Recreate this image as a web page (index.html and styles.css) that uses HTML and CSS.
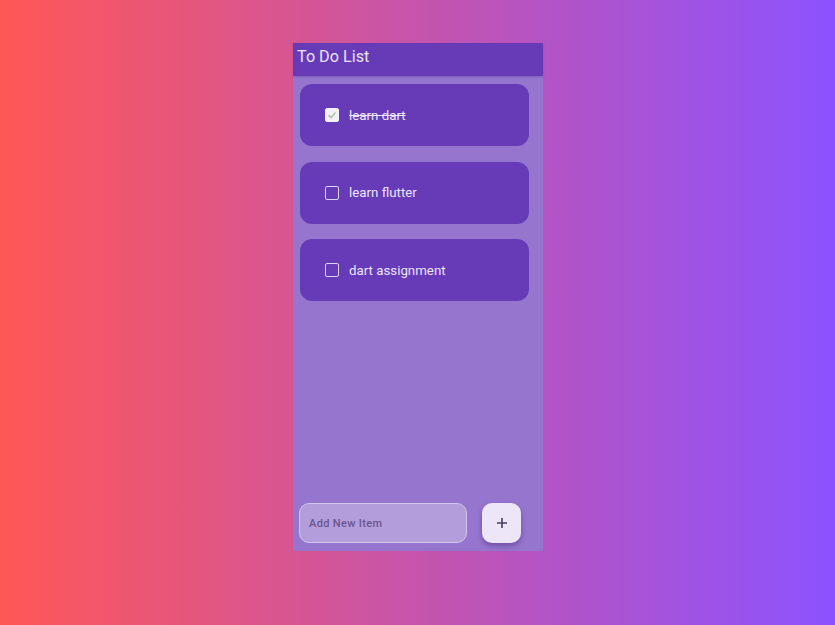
FILE: index.html
```html
<!DOCTYPE html>
<html>
<head>
<meta charset="utf-8">
<link rel="stylesheet" href="styles.css">
</head>
<body>
<div class="phone">
  <div class="appbar">To Do List</div>
  <div class="list">
    <div class="card">
      <span class="box checked">
        <svg width="10" height="10" viewBox="0 0 10 10"><path d="M1.5 5.2 L4 7.5 L8.5 2.5" fill="none" stroke="#a9c7a4" stroke-width="1.6"/></svg>
      </span>
      <span class="label done">learn dart</span>
    </div>
    <div class="card">
      <span class="box"></span>
      <span class="label">learn flutter</span>
    </div>
    <div class="card">
      <span class="box"></span>
      <span class="label">dart assignment</span>
    </div>
  </div>
  <div class="bottom">
    <div class="input">Add New Item</div>
    <div class="add">
      <svg width="12" height="12" viewBox="0 0 12 12"><path d="M6 1 V11 M1 6 H11" stroke="#4a3b63" stroke-width="1.6"/></svg>
    </div>
  </div>
</div>
</body>
</html>
```
FILE: styles.css
```css
html, body {
  margin: 0;
  padding: 0;
}
body {
  width: 835px;
  height: 625px;
  background: linear-gradient(to right, #ff5757, #8c52ff);
  font-family: Roboto, "Noto Sans", sans-serif;
  overflow: hidden;
}
.phone {
  width: 250px;
  height: 508px;
  margin: 43px 0 0 293px;
  background: #9575cd;
  display: flex;
  flex-direction: column;
}
.appbar {
  height: 33px;
  background: #673ab7;
  color: #ebe4f6;
  font-size: 16.2px;
  line-height: 27px;
  padding-left: 4px;
  box-shadow: 0 1px 2px rgba(60, 30, 110, 0.25);
}
.list {
  flex: 1;
  display: flex;
  flex-direction: column;
  gap: 15.5px;
  padding: 8px 14px 0 7px;
}
.card {
  height: 62px;
  background: #673ab7;
  border-radius: 12px;
  display: flex;
  align-items: center;
  padding-left: 25px;
  gap: 10px;
}
.box {
  width: 14px;
  height: 14px;
  box-sizing: border-box;
  border: 1.6px solid #ddd3ee;
  border-radius: 2px;
  display: flex;
  align-items: center;
  justify-content: center;
}
.box.checked {
  background: #f4f0fa;
  border-color: #f4f0fa;
}
.label {
  color: #ebe5f6;
  font-size: 13.3px;
}
.label.done {
  text-decoration: line-through;
}
.bottom {
  display: flex;
  align-items: center;
  padding: 0 21px 8px 6px;
  gap: 15px;
}
.input {
  width: 168px;
  height: 40px;
  box-sizing: border-box;
  background: #b39ddb;
  border: 1px solid #d3c6ea;
  border-radius: 10px;
  color: #6a558e;
  font-size: 11px;
  font-weight: 500;
  display: flex;
  align-items: center;
  padding-left: 9px;
  letter-spacing: 0.35px;
}
.add {
  width: 39px;
  height: 40px;
  background: #ede6f8;
  border-radius: 10px;
  display: flex;
  align-items: center;
  justify-content: center;
  box-shadow: 0 3px 5px rgba(50, 20, 100, 0.35);
}
```
